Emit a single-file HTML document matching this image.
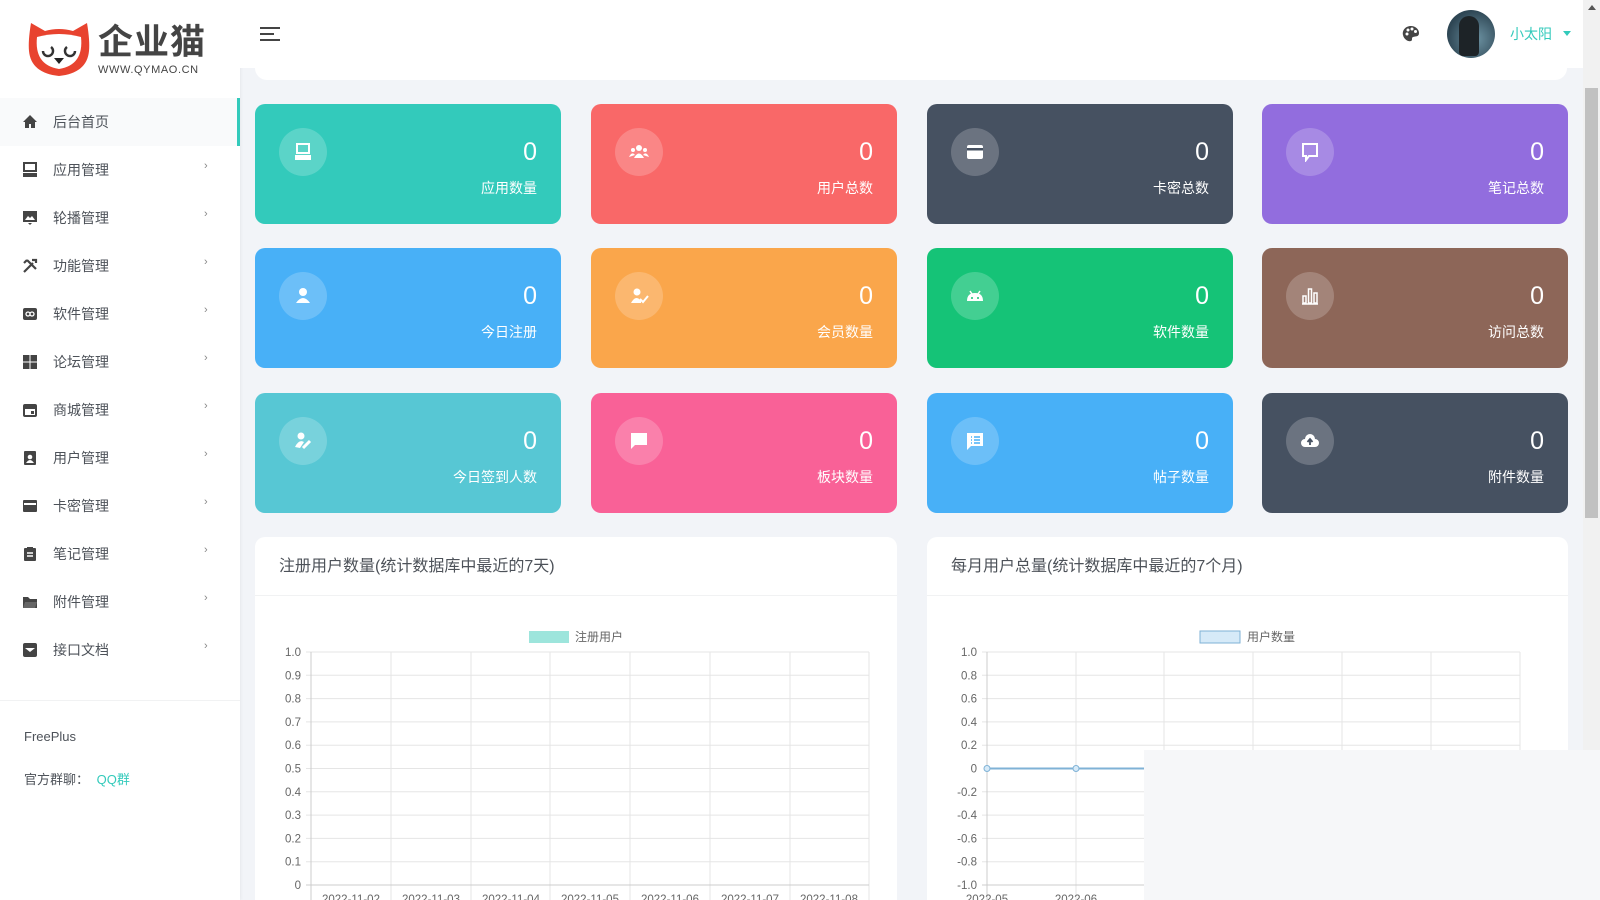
<!DOCTYPE html>
<html><head><meta charset="utf-8">
<style>
*{margin:0;padding:0;box-sizing:border-box}
html{width:1600px;height:900px;overflow:hidden}
body{width:1600px;height:900px;overflow:hidden;background:#f2f4f8;font-family:"Liberation Sans","Noto Sans CJK SC",sans-serif;position:relative;color:#4d5259}
.side{position:absolute;left:0;top:0;width:240px;height:900px;background:#fff;box-shadow:1px 0 3px rgba(0,0,0,.05)}
.nav{position:absolute;left:0;width:240px;height:48px;font-size:14px;color:#4d5259}
.nav .ic{position:absolute;left:22px;top:16px;width:16px;height:16px}
.nav .t{position:absolute;left:53px;top:14px;line-height:20px}
.nav .ch{position:absolute;left:204px;top:14px;font-size:11px;color:#888}
.nav.act{background:#f9fafb}
.nav.act:after{content:"";position:absolute;right:0;top:0;width:3px;height:48px;background:#33cabb}
.hdr{position:absolute;left:240px;top:0;width:1343px;height:68px;background:#fff}
.card{position:absolute;width:306px;height:120px;border-radius:10px;color:#fff}
.card .c{position:absolute;left:24px;top:24px;width:48px;height:48px;border-radius:50%;background:rgba(255,255,255,.2)}
.card .c svg{position:absolute;left:14px;top:14px;width:20px;height:20px}
.card .n{position:absolute;right:24px;top:34px;font-size:25px;line-height:28px}
.card .l{position:absolute;right:24px;top:74px;font-size:14px;line-height:20px}
.panel{position:absolute;top:537px;height:363px;background:#fff;border-radius:10px 10px 0 0}
.panel .h{position:absolute;left:24px;top:19px;font-size:16px;color:#4d5259;line-height:22px}
.panel .hl{position:absolute;left:0;right:0;top:58px;border-top:1px solid #f1f2f3}
</style></head><body>
<div class="side">
 <svg style="position:absolute;left:27px;top:21px" width="64" height="57" viewBox="0 0 64 57">
  <path d="M4 2 L18 10 Q32 6 46 10 L60 2 Q63 20 62 30 Q60 52 32 55 Q4 52 2 30 Q1 20 4 2Z" fill="#e8432f"/>
  <path d="M10 16 Q32 10 54 16 Q57 44 32 48 Q7 44 10 16Z" fill="#fff"/>
  <path d="M16 30 a5 5 0 1 0 8 -4" stroke="#333" stroke-width="2.5" fill="none"/>
  <path d="M40 26 a5 5 0 1 0 8 4" stroke="#333" stroke-width="2.5" fill="none"/>
  <path d="M27 37 h10 l-5 6z" fill="#222"/>
 </svg>
 <div style="position:absolute;left:98px;top:20px;font-size:35px;font-weight:bold;color:#444;letter-spacing:1px;line-height:40px;font-family:'Noto Sans CJK SC',sans-serif">企业猫</div>
 <div style="position:absolute;left:98px;top:64px;font-size:11px;color:#444;letter-spacing:.6px">WWW.QYMAO.CN</div>

 <div class="nav act" style="top:98px"><svg class="ic" viewBox="0 0 16 16"><path d="M8 1 L1 8 h2 v6 h4 v-4 h2 v4 h4 v-6 h2z" fill="#444"/></svg><span class="t">后台首页</span></div>
 <div class="nav" style="top:146px"><svg class="ic" viewBox="0 0 16 16"><rect x="2" y="1" width="12" height="8" fill="none" stroke="#444" stroke-width="2"/><rect x="1" y="11" width="14" height="4" fill="#444"/></svg><span class="t">应用管理</span><span class="ch">›</span></div>
 <div class="nav" style="top:194px"><svg class="ic" viewBox="0 0 16 16"><rect x="1" y="1" width="14" height="11" fill="#444"/><path d="M3 10 l3-4 2 2 2-2 3 4z" fill="#fff"/><path d="M6 13 h4 l-2 2z" fill="#444"/></svg><span class="t">轮播管理</span><span class="ch">›</span></div>
 <div class="nav" style="top:242px"><svg class="ic" viewBox="0 0 16 16"><path d="M2 14 L11 5 M5 2 L14 11 M10 2 l4 0 0 3 M2 5 l3-3" stroke="#444" stroke-width="2.2" fill="none"/></svg><span class="t">功能管理</span><span class="ch">›</span></div>
 <div class="nav" style="top:290px"><svg class="ic" viewBox="0 0 16 16"><rect x="1" y="2" width="14" height="12" rx="2" fill="#444"/><path d="M4 8 a2 2 0 1 0 4 0 a2 2 0 1 1 4 0 a2 2 0 1 1 -4 0 a2 2 0 1 0 -4 0" stroke="#fff" fill="none" stroke-width="1.3"/></svg><span class="t">软件管理</span><span class="ch">›</span></div>
 <div class="nav" style="top:338px"><svg class="ic" viewBox="0 0 16 16"><rect x="1" y="1" width="6.5" height="6.5" fill="#444"/><rect x="8.5" y="1" width="6.5" height="6.5" fill="#444"/><rect x="1" y="8.5" width="6.5" height="6.5" fill="#444"/><rect x="8.5" y="8.5" width="6.5" height="6.5" fill="#444"/></svg><span class="t">论坛管理</span><span class="ch">›</span></div>
 <div class="nav" style="top:386px"><svg class="ic" viewBox="0 0 16 16"><rect x="1" y="2" width="14" height="13" rx="2" fill="#444"/><rect x="3" y="7" width="10" height="6" fill="#fff"/><rect x="9" y="9" width="3" height="3" fill="#444"/></svg><span class="t">商城管理</span><span class="ch">›</span></div>
 <div class="nav" style="top:434px"><svg class="ic" viewBox="0 0 16 16"><rect x="2" y="1" width="12" height="14" rx="1" fill="#444"/><circle cx="8" cy="7" r="2.3" fill="#fff"/><path d="M4 13 q4-6 8 0z" fill="#fff"/></svg><span class="t">用户管理</span><span class="ch">›</span></div>
 <div class="nav" style="top:482px"><svg class="ic" viewBox="0 0 16 16"><rect x="1" y="2" width="14" height="12" rx="1" fill="#444"/><rect x="2" y="5" width="12" height="2" fill="#fff"/></svg><span class="t">卡密管理</span><span class="ch">›</span></div>
 <div class="nav" style="top:530px"><svg class="ic" viewBox="0 0 16 16"><rect x="2" y="2" width="12" height="13" rx="1" fill="#444"/><rect x="5" y="1" width="6" height="3" fill="#444"/><path d="M5 7 h6 M5 10 h6" stroke="#fff" stroke-width="1.5"/></svg><span class="t">笔记管理</span><span class="ch">›</span></div>
 <div class="nav" style="top:578px"><svg class="ic" viewBox="0 0 16 16"><path d="M1 3 h5 l2 2 h7 v9 h-14z" fill="#444"/><path d="M3 8 h12 l-2 6 h-12z" fill="#666"/></svg><span class="t">附件管理</span><span class="ch">›</span></div>
 <div class="nav" style="top:626px"><svg class="ic" viewBox="0 0 16 16"><rect x="1" y="1" width="14" height="14" rx="2" fill="#444"/><path d="M3 6 h10 l-5 4z" fill="#fff"/></svg><span class="t">接口文档</span><span class="ch">›</span></div>
 <div style="position:absolute;left:0;top:700px;width:240px;border-top:1px solid #f1f2f3"></div>
 <div style="position:absolute;left:24px;top:729px;font-size:13px;color:#4d5259">FreePlus</div>
 <div style="position:absolute;left:24px;top:769px;font-size:13px;color:#4d5259">官方群聊： <span style="color:#33cabb;margin-left:4px">QQ群</span></div>
</div>

<div style="position:absolute;left:255px;top:60px;width:1312px;height:20px;background:#fff;border-radius:0 0 12px 12px"></div>
<div class="hdr">
 <div style="position:absolute;left:20px;top:27px;width:20px;height:2px;background:#444"></div>
 <div style="position:absolute;left:20px;top:33px;width:14px;height:2px;background:#444"></div>
 <div style="position:absolute;left:20px;top:39px;width:20px;height:2px;background:#444"></div>
 <svg style="position:absolute;left:1162px;top:25px" width="18" height="18" viewBox="0 0 18 18"><path d="M9 1 C3 1 0 6 1 10 C2 15 7 17 9 16 C11 15 9 13 11 12 C14 11 17 12 17 8 C17 4 13 1 9 1Z" fill="#444"/><circle cx="5" cy="9" r="1.5" fill="#fff"/><circle cx="6" cy="5" r="1.5" fill="#fff"/><circle cx="10" cy="4" r="1.5" fill="#fff"/><circle cx="13.5" cy="6.5" r="1.5" fill="#fff"/></svg>
 <div style="position:absolute;left:1207px;top:10px;width:48px;height:48px;border-radius:50%;background:radial-gradient(circle at 60% 60%,#6d93a3,#2e4654 70%);overflow:hidden"><div style="position:absolute;left:12px;top:6px;width:20px;height:40px;background:#1d2327;border-radius:10px 10px 4px 4px"></div></div>
 <div style="position:absolute;left:1270px;top:24px;font-size:14px;color:#33cabb">小太阳</div>
 <div style="position:absolute;left:1323px;top:31px;border:4px solid transparent;border-top:5px solid #33cabb"></div>
</div>

<div class="card" style="left:255px;top:104px;background:#33cabb"><div class="c"><svg viewBox="0 0 20 20"><rect x="4" y="2" width="12" height="9" fill="none" stroke="#fff" stroke-width="2"/><rect x="2" y="13" width="16" height="5" fill="#fff"/></svg></div><div class="n">0</div><div class="l">应用数量</div></div>
<div class="card" style="left:591px;top:104px;background:#f96868"><div class="c"><svg viewBox="0 0 20 20"><circle cx="10" cy="6" r="3" fill="#fff"/><circle cx="4" cy="8" r="2" fill="#fff"/><circle cx="16" cy="8" r="2" fill="#fff"/><path d="M5 16 q5-9 10 0z M0 15 q3-6 6-2 M20 15 q-3-6-6-2" fill="#fff"/></svg></div><div class="n">0</div><div class="l">用户总数</div></div>
<div class="card" style="left:927px;top:104px;background:#465161"><div class="c"><svg viewBox="0 0 20 20"><rect x="2" y="3" width="16" height="14" rx="2" fill="#fff"/><rect x="2" y="6" width="16" height="2.5" fill="#465161"/></svg></div><div class="n">0</div><div class="l">卡密总数</div></div>
<div class="card" style="left:1262px;top:104px;background:#926dde"><div class="c"><svg viewBox="0 0 20 20"><path d="M3 2 h14 v12 h-8 l-3 4 v-4 h-3z" fill="none" stroke="#fff" stroke-width="2"/></svg></div><div class="n">0</div><div class="l">笔记总数</div></div>

<div class="card" style="left:255px;top:248px;background:#48b0f7"><div class="c"><svg viewBox="0 0 20 20"><circle cx="10" cy="6" r="4" fill="#fff"/><path d="M3 17 q7-10 14 0z" fill="#fff"/></svg></div><div class="n">0</div><div class="l">今日注册</div></div>
<div class="card" style="left:591px;top:248px;background:#faa64b"><div class="c"><svg viewBox="0 0 20 20"><circle cx="8" cy="6" r="3.5" fill="#fff"/><path d="M2 17 q5-9 10-2 v2z" fill="#fff"/><path d="M11 13 l3 3 5-6" stroke="#fff" stroke-width="2" fill="none"/></svg></div><div class="n">0</div><div class="l">会员数量</div></div>
<div class="card" style="left:927px;top:248px;background:#15c377"><div class="c"><svg viewBox="0 0 20 20"><path d="M2 15 q0-8 8-8 q8 0 8 8z" fill="#fff"/><path d="M5 5 l2 3 M15 5 l-2 3" stroke="#fff" stroke-width="1.5"/><circle cx="7" cy="12" r="1" fill="#15c377"/><circle cx="13" cy="12" r="1" fill="#15c377"/></svg></div><div class="n">0</div><div class="l">软件数量</div></div>
<div class="card" style="left:1262px;top:248px;background:#8d6658"><div class="c"><svg viewBox="0 0 20 20"><path d="M2 18 h16" stroke="#fff" stroke-width="1.5"/><rect x="3" y="10" width="3" height="7" fill="none" stroke="#fff" stroke-width="1.5"/><rect x="8.5" y="3" width="3" height="14" fill="none" stroke="#fff" stroke-width="1.5"/><rect x="14" y="7" width="3" height="10" fill="none" stroke="#fff" stroke-width="1.5"/></svg></div><div class="n">0</div><div class="l">访问总数</div></div>

<div class="card" style="left:255px;top:393px;background:#57c7d4"><div class="c"><svg viewBox="0 0 20 20"><circle cx="8" cy="5" r="3.5" fill="#fff"/><path d="M2 16 q4-8 9-5 l-4 6z" fill="#fff"/><path d="M10 17 l7-7" stroke="#fff" stroke-width="3"/></svg></div><div class="n">0</div><div class="l">今日签到人数</div></div>
<div class="card" style="left:591px;top:393px;background:#f96197"><div class="c"><svg viewBox="0 0 20 20"><path d="M2 2 h16 v12 h-12 l-4 4z" fill="#fff"/></svg></div><div class="n">0</div><div class="l">板块数量</div></div>
<div class="card" style="left:927px;top:393px;background:#48b0f7"><div class="c"><svg viewBox="0 0 20 20"><path d="M2 2 h16 v13 h-12 l-4 4z" fill="#fff"/><path d="M6 6 h1 M9 6 h6 M6 9 h1 M9 9 h6 M6 12 h1 M9 12 h6" stroke="#48b0f7" stroke-width="1.5"/></svg></div><div class="n">0</div><div class="l">帖子数量</div></div>
<div class="card" style="left:1262px;top:393px;background:#465161"><div class="c"><svg viewBox="0 0 20 20"><path d="M5 16 a4 4 0 0 1 0-8 a5 5 0 0 1 10 0 a4 4 0 0 1 0 8z" fill="#fff"/><path d="M10 14 v-5 M7.5 11 l2.5-3 2.5 3" stroke="#465161" stroke-width="1.8" fill="none"/></svg></div><div class="n">0</div><div class="l">附件数量</div></div>

<div class="panel" style="left:255px;width:642px">
 <div class="h">注册用户数量(统计数据库中最近的7天)</div><div class="hl"></div>
</div>
<svg style="position:absolute;left:255px;top:537px" width="642" height="363">
 <rect x="274" y="94" width="40" height="12" fill="#9de5dc"/>
 <text x="320" y="104" font-size="12" fill="#666" font-family="Liberation Sans,Noto Sans CJK SC,sans-serif">注册用户</text>
 <g stroke="#e5e5e5" stroke-width="1">
  <line x1="51" y1="115" x2="614" y2="115"/><line x1="51" y1="138.3" x2="614" y2="138.3"/><line x1="51" y1="161.6" x2="614" y2="161.6"/><line x1="51" y1="184.9" x2="614" y2="184.9"/><line x1="51" y1="208.2" x2="614" y2="208.2"/><line x1="51" y1="231.5" x2="614" y2="231.5"/><line x1="51" y1="254.8" x2="614" y2="254.8"/><line x1="51" y1="278.1" x2="614" y2="278.1"/><line x1="51" y1="301.4" x2="614" y2="301.4"/><line x1="51" y1="324.7" x2="614" y2="324.7"/>
  <line x1="136" y1="115" x2="136" y2="363"/><line x1="216" y1="115" x2="216" y2="363"/><line x1="295" y1="115" x2="295" y2="363"/><line x1="375" y1="115" x2="375" y2="363"/><line x1="455" y1="115" x2="455" y2="363"/><line x1="535" y1="115" x2="535" y2="363"/><line x1="614" y1="115" x2="614" y2="363"/>
 </g>
 <line x1="56" y1="115" x2="56" y2="363" stroke="#ccc"/><line x1="51" y1="348" x2="614" y2="348" stroke="#ccc"/>
 <g font-size="11.5" fill="#666" text-anchor="end" font-family="Liberation Sans,sans-serif">
  <text x="46" y="119">1.0</text><text x="46" y="142.3">0.9</text><text x="46" y="165.6">0.8</text><text x="46" y="188.9">0.7</text><text x="46" y="212.2">0.6</text><text x="46" y="235.5">0.5</text><text x="46" y="258.8">0.4</text><text x="46" y="282.1">0.3</text><text x="46" y="305.4">0.2</text><text x="46" y="328.7">0.1</text><text x="46" y="352">0</text>
 </g>
 <g font-size="11.5" fill="#666" text-anchor="middle" font-family="Liberation Sans,sans-serif">
  <text x="96" y="366">2022-11-02</text><text x="176" y="366">2022-11-03</text><text x="256" y="366">2022-11-04</text><text x="335" y="366">2022-11-05</text><text x="415" y="366">2022-11-06</text><text x="495" y="366">2022-11-07</text><text x="574" y="366">2022-11-08</text>
 </g>
</svg>

<div class="panel" style="left:927px;width:641px">
 <div class="h">每月用户总量(统计数据库中最近的7个月)</div><div class="hl"></div>
</div>
<svg style="position:absolute;left:927px;top:537px" width="641" height="363">
 <rect x="273" y="94" width="40" height="12" fill="#d6eaf8" stroke="#7fb2d6"/>
 <text x="320" y="104" font-size="12" fill="#666" font-family="Liberation Sans,Noto Sans CJK SC,sans-serif">用户数量</text>
 <g stroke="#e5e5e5">
  <line x1="55" y1="115" x2="593" y2="115"/><line x1="55" y1="138.3" x2="593" y2="138.3"/><line x1="55" y1="161.6" x2="593" y2="161.6"/><line x1="55" y1="184.9" x2="593" y2="184.9"/><line x1="55" y1="208.2" x2="593" y2="208.2"/><line x1="55" y1="254.8" x2="593" y2="254.8"/><line x1="55" y1="278.1" x2="593" y2="278.1"/><line x1="55" y1="301.4" x2="593" y2="301.4"/><line x1="55" y1="324.7" x2="593" y2="324.7"/>
  <line x1="149" y1="115" x2="149" y2="363"/><line x1="237" y1="115" x2="237" y2="363"/><line x1="326" y1="115" x2="326" y2="363"/><line x1="415" y1="115" x2="415" y2="363"/><line x1="504" y1="115" x2="504" y2="363"/><line x1="593" y1="115" x2="593" y2="363"/>
 </g>
 <line x1="60" y1="115" x2="60" y2="363" stroke="#ccc"/><line x1="55" y1="348" x2="593" y2="348" stroke="#ccc"/>
 <line x1="60" y1="231.5" x2="593" y2="231.5" stroke="#7fb2d6" stroke-width="2"/>
 <circle cx="60" cy="231.5" r="3" fill="#d6eaf8" stroke="#7fb2d6"/><circle cx="149" cy="231.5" r="3" fill="#d6eaf8" stroke="#7fb2d6"/>
 <g font-size="11.5" fill="#666" text-anchor="end" font-family="Liberation Sans,sans-serif">
  <text x="50" y="119">1.0</text><text x="50" y="142.3">0.8</text><text x="50" y="165.6">0.6</text><text x="50" y="188.9">0.4</text><text x="50" y="212.2">0.2</text><text x="50" y="235.5">0</text><text x="50" y="258.8">-0.2</text><text x="50" y="282.1">-0.4</text><text x="50" y="305.4">-0.6</text><text x="50" y="328.7">-0.8</text><text x="50" y="352">-1.0</text>
 </g>
 <g font-size="11.5" fill="#666" text-anchor="middle" font-family="Liberation Sans,sans-serif">
  <text x="60" y="366">2022-05</text><text x="149" y="366">2022-06</text>
 </g>
</svg>

<div style="position:absolute;left:1583px;top:0;width:17px;height:900px;background:#f1f1f1"></div>
<div style="position:absolute;left:1588px;top:5px;border:4px solid transparent;border-bottom:5px solid #555;border-top:0"></div>
<div style="position:absolute;left:1585px;top:88px;width:13px;height:430px;background:#c1c1c1"></div>

<div style="position:absolute;left:1144px;top:750px;width:456px;height:150px;background:#f6f7f9"></div>
</body></html>
